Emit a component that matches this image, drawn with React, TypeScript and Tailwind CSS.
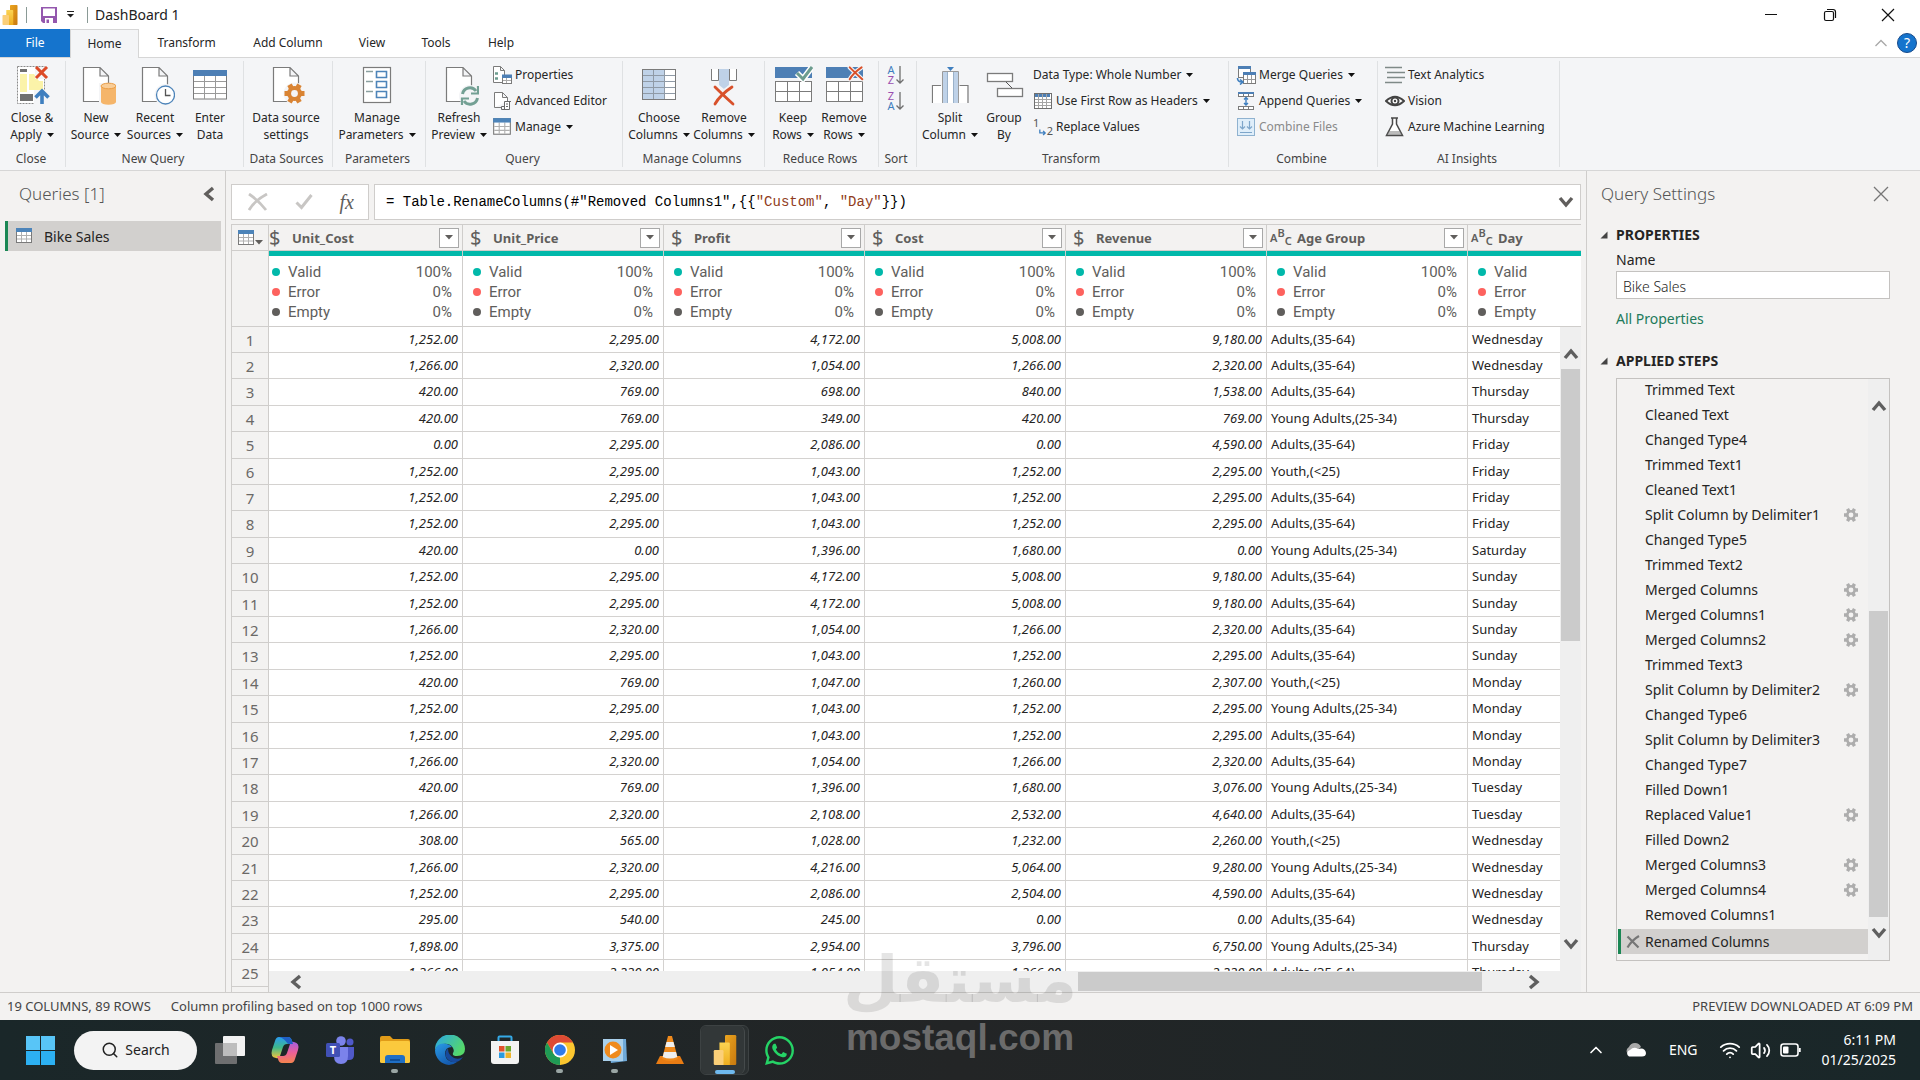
import React from "react";
import { FaWhatsapp } from "react-icons/fa";
import { ChevronUp, Search, Volume2, Wifi } from "lucide-react";

const A = "Adults,(35-64)";
const YA = "Young Adults,(25-34)";
const Y = "Youth,(<25)";

const rows = [
  ["1,252.00", "2,295.00", "4,172.00", "5,008.00", "9,180.00", A, "Wednesday"],
  ["1,266.00", "2,320.00", "1,054.00", "1,266.00", "2,320.00", A, "Wednesday"],
  ["420.00", "769.00", "698.00", "840.00", "1,538.00", A, "Thursday"],
  ["420.00", "769.00", "349.00", "420.00", "769.00", YA, "Thursday"],
  ["0.00", "2,295.00", "2,086.00", "0.00", "4,590.00", A, "Friday"],
  ["1,252.00", "2,295.00", "1,043.00", "1,252.00", "2,295.00", Y, "Friday"],
  ["1,252.00", "2,295.00", "1,043.00", "1,252.00", "2,295.00", A, "Friday"],
  ["1,252.00", "2,295.00", "1,043.00", "1,252.00", "2,295.00", A, "Friday"],
  ["420.00", "0.00", "1,396.00", "1,680.00", "0.00", YA, "Saturday"],
  ["1,252.00", "2,295.00", "4,172.00", "5,008.00", "9,180.00", A, "Sunday"],
  ["1,252.00", "2,295.00", "4,172.00", "5,008.00", "9,180.00", A, "Sunday"],
  ["1,266.00", "2,320.00", "1,054.00", "1,266.00", "2,320.00", A, "Sunday"],
  ["1,252.00", "2,295.00", "1,043.00", "1,252.00", "2,295.00", A, "Sunday"],
  ["420.00", "769.00", "1,047.00", "1,260.00", "2,307.00", Y, "Monday"],
  ["1,252.00", "2,295.00", "1,043.00", "1,252.00", "2,295.00", YA, "Monday"],
  ["1,252.00", "2,295.00", "1,043.00", "1,252.00", "2,295.00", A, "Monday"],
  ["1,266.00", "2,320.00", "1,054.00", "1,266.00", "2,320.00", A, "Monday"],
  ["420.00", "769.00", "1,396.00", "1,680.00", "3,076.00", YA, "Tuesday"],
  ["1,266.00", "2,320.00", "2,108.00", "2,532.00", "4,640.00", A, "Tuesday"],
  ["308.00", "565.00", "1,028.00", "1,232.00", "2,260.00", Y, "Wednesday"],
  ["1,266.00", "2,320.00", "4,216.00", "5,064.00", "9,280.00", YA, "Wednesday"],
  ["1,252.00", "2,295.00", "2,086.00", "2,504.00", "4,590.00", A, "Wednesday"],
  ["295.00", "540.00", "245.00", "0.00", "0.00", A, "Wednesday"],
  ["1,898.00", "3,375.00", "2,954.00", "3,796.00", "6,750.00", YA, "Thursday"],
  ["1,266.00", "2,320.00", "1,054.00", "1,266.00", "2,320.00", A, "Thursday"],
];

const columns = [
  { name: "Unit_Cost", type: "money" },
  { name: "Unit_Price", type: "money" },
  { name: "Profit", type: "money" },
  { name: "Cost", type: "money" },
  { name: "Revenue", type: "money" },
  { name: "Age Group", type: "text" },
  { name: "Day", type: "text", last: true },
];

const stats = [
  { label: "Valid", value: "100%", dot: "bg-[#01b8aa]" },
  { label: "Error", value: "0%", dot: "bg-[#fd625e]" },
  { label: "Empty", value: "0%", dot: "bg-[#605e5c]" },
];

const steps = [
  { name: "Trimmed Text" },
  { name: "Cleaned Text" },
  { name: "Changed Type4" },
  { name: "Trimmed Text1" },
  { name: "Cleaned Text1" },
  { name: "Split Column by Delimiter1", gear: true },
  { name: "Changed Type5" },
  { name: "Trimmed Text2" },
  { name: "Merged Columns", gear: true },
  { name: "Merged Columns1", gear: true },
  { name: "Merged Columns2", gear: true },
  { name: "Trimmed Text3" },
  { name: "Split Column by Delimiter2", gear: true },
  { name: "Changed Type6" },
  { name: "Split Column by Delimiter3", gear: true },
  { name: "Changed Type7" },
  { name: "Filled Down1" },
  { name: "Replaced Value1", gear: true },
  { name: "Filled Down2" },
  { name: "Merged Columns3", gear: true },
  { name: "Merged Columns4", gear: true },
  { name: "Removed Columns1" },
];

/* ---------- small shared pieces ---------- */

function Caret() {
  return (
    <svg width="7" height="4" viewBox="0 0 7 4" className="ml-[5px] inline-block shrink-0 align-middle">
      <path d="M0 0H7L3.5 4Z" fill="#111" />
    </svg>
  );
}

function Chevron({ dir, color = "#5f5f5f" }: { dir: "up" | "down" | "left" | "right"; color?: string }) {
  const d = {
    up: "M2 12L8 5L14 12",
    down: "M2 4L8 11L14 4",
    left: "M11 2L4 8L11 14",
    right: "M5 2L12 8L5 14",
  }[dir];
  return (
    <svg width="16" height="16" viewBox="0 0 16 16" className="shrink-0">
      <path d={d} fill="none" stroke={color} strokeWidth="3.4" />
    </svg>
  );
}

function PowerBi({ size }: { size: number }) {
  return (
    <svg width={size} height={size} viewBox="0 0 20 20">
      <defs>
        <linearGradient id="pbiBack" x1="0" y1="0" x2="1" y2="1">
          <stop offset="0" stopColor="#eba51f" />
          <stop offset="1" stopColor="#c8790f" />
        </linearGradient>
        <linearGradient id="pbiMid" x1="0" y1="0" x2="0" y2="1">
          <stop offset="0" stopColor="#fbd352" />
          <stop offset="1" stopColor="#efae1f" />
        </linearGradient>
      </defs>
      <rect x="10" y="0" width="7.5" height="20" rx="0.8" fill="url(#pbiBack)" />
      <path d="M6.3 5H12.4Q13.2 5 13.2 5.8V20H6.3Z" fill="url(#pbiMid)" />
      <path d="M2.5 10.8Q2.5 10 3.3 10H8.2Q9 10 9 10.8V20H3.3Q2.5 20 2.5 19.2Z" fill="#fbcf78" />
    </svg>
  );
}

function TableIcon({ w = 18 }: { w?: number }) {
  return (
    <svg width={w} height={w} viewBox="0 0 18 18" className="shrink-0">
      <rect x="1.5" y="1.5" width="15" height="14" fill="#fff" stroke="#7a7a7a" />
      <path d="M6.5 5V15M11.5 5V15M2 8.5H16M2 12H16" stroke="#b0b0b0" />
      <rect x="1" y="1" width="16" height="4" fill="#4d84b9" />
    </svg>
  );
}

function Page() {
  return <path d="M3.5 1.5H20L28.5 10V35.5H3.5Z M20 1.5V10H28.5" fill="#fff" stroke="#7b7b7b" strokeWidth="1.2" />;
}

function gearPath(cx: number, cy: number, r: number) {
  const teeth = [];
  for (let i = 0; i < 6; i++) {
    const a = (i * Math.PI) / 3;
    teeth.push(`M${cx} ${cy}L${cx + Math.cos(a) * r} ${cy + Math.sin(a) * r}`);
  }
  return teeth.join("");
}

function Gear() {
  return (
    <svg width="16" height="16" viewBox="0 0 16 16">
      <path d={gearPath(8, 8, 7)} stroke="#adadad" strokeWidth="3.4" />
      <circle cx="8" cy="8" r="5" fill="#adadad" />
      <circle cx="8" cy="8" r="2.4" fill="#f3f2f1" />
    </svg>
  );
}

/* ---------- ribbon drawings ---------- */

function Icon40({ children, page }: { children: React.ReactNode; page?: boolean }) {
  return (
    <svg width="40" height="40" viewBox={page ? "-4 0 40 40" : "0 0 40 40"} className="shrink-0">
      {page && <Page />}
      {children}
    </svg>
  );
}

const cross = (
  <g fill="none" strokeLinecap="round">
    <path d="M-9 -8Q-2 -1 9 9M8 -8Q-4 0 -9 9" stroke="#f4f5f7" strokeWidth="6" />
    <path d="M-9 -8Q-2 -1 9 9M8 -8Q-4 0 -9 9" stroke="#d8512b" strokeWidth="2.8" />
  </g>
);

const icons = {
  closeApply: (
    <Icon40>
      <rect x="5.5" y="0.5" width="27" height="37" fill="#fff" stroke="#8a8a8a" strokeDasharray="2 1" />
      <rect x="8" y="3" width="7" height="3" fill="#707070" />
      <rect x="8" y="8" width="7" height="18" fill="#fbf3a9" />
      <path d="M17 8H22L27 15H31V24H17Z" fill="#fbf3a9" />
      <rect x="8" y="28" width="13" height="7" fill="#707070" />
      <path d="M23 1H38V13H23Z M22 24H38V40H22Z" fill="#f4f5f7" />
      <path d="M24 1L35 12M35 1L24 12" stroke="#dc4a27" strokeWidth="3" />
      <path d="M30 38V26M23.5 31.5L30 25L36.5 31.5" fill="none" stroke="#3f7fbf" strokeWidth="3.6" />
    </Icon40>
  ),
  newSource: (
    <Icon40 page>
      <path d="M19 17H40V40H19Z" fill="#f4f5f7" />
      <path d="M21 20V36A7.5 2.8 0 0 0 36 36V20Z" fill="#f5b56a" />
      <ellipse cx="28.5" cy="20" rx="7.5" ry="2.8" fill="#f9cd97" stroke="#eb9d45" />
    </Icon40>
  ),
  recent: (
    <Icon40 page>
      <circle cx="26.5" cy="29" r="11" fill="#f4f5f7" />
      <circle cx="26.5" cy="29" r="9" fill="#fff" stroke="#4d84b9" strokeWidth="1.3" />
      <path d="M26.5 23V29.5H31.5" fill="none" stroke="#555" strokeWidth="1.3" />
    </Icon40>
  ),
  enterData: (
    <Icon40>
      <rect x="3.5" y="5" width="33" height="28" fill="#fff" stroke="#7b7b7b" />
      <path d="M14.5 9V33M25.5 9V33M4 15.5H36M4 21.5H36M4 27.5H36" stroke="#999" />
      <rect x="3" y="4" width="34" height="6" fill="#4d7fb5" />
    </Icon40>
  ),
  dataSource: (
    <Icon40 page>
      <circle cx="24.5" cy="27.5" r="11" fill="#f4f5f7" />
      <path d={gearPath(24.5, 27.5, 10)} stroke="#d98434" strokeWidth="5" />
      <circle cx="24.5" cy="27.5" r="7.5" fill="#d98434" />
      <circle cx="24.5" cy="27.5" r="3.4" fill="#f4f5f7" />
    </Icon40>
  ),
  params: (
    <Icon40>
      <rect x="6.5" y="1.5" width="27" height="35" fill="#fff" stroke="#7b7b7b" strokeWidth="1.2" />
      <path d="M9 5.5H16M9 15.5H16M9 25.5H16" stroke="#8aa0a0" strokeWidth="1.3" />
      <path d="M19.5 5.5H29.5V11.5H19.5ZM19.5 15.5H29.5V21.5H19.5ZM19.5 25.5H29.5V31.5H19.5Z" fill="#fff" stroke="#4d84b9" strokeWidth="1.6" />
    </Icon40>
  ),
  refresh: (
    <Icon40 page>
      <circle cx="27" cy="30" r="11" fill="#f4f5f7" />
      <g fill="none" stroke="#73a094" strokeWidth="3">
        <path d="M19.500 28A7.500 7.500 0 0 1 33 25" />
        <path d="M34.500 32A7.500 7.500 0 0 1 21 35" />
        <path d="M35 20V27.500H28M19 39V32.500H26" strokeWidth="2.2" />
      </g>
    </Icon40>
  ),
  chooseCols: (
    <Icon40>
      <rect x="3.5" y="3.5" width="33" height="30" fill="#fff" />
      <rect x="4" y="4" width="22" height="29" fill="#bfd2e8" />
      <path d="M14.5 4V33M25.5 4V33M4 9.5H36M4 15.5H36M4 21.5H36M4 27.5H36" stroke="#8f9aa6" />
      <rect x="3.5" y="3.5" width="33" height="30" fill="none" stroke="#7b7b7b" />
    </Icon40>
  ),
  removeCols: (
    <Icon40>
      <path d="M7.5 3V14.5H14.5V3M25.5 3V14.5H32.5V3" fill="#fff" stroke="#7b7b7b" />
      <path d="M15 3H25V19L20 23L15 19Z" fill="#bfd2e8" />
      <g transform="translate(20 29)">{cross}</g>
    </Icon40>
  ),
  keepRows: (
    <Icon40>
      <rect x="2" y="1" width="37" height="11" fill="#4d7fb5" />
      <rect x="2.5" y="15.5" width="36" height="20" fill="#fff" stroke="#7b7b7b" />
      <path d="M14.5 16V35M26.5 16V35M3 25.5H38" stroke="#7b7b7b" />
      <path d="M24 7L30 13L39 1" fill="none" stroke="#fff" strokeWidth="6" />
      <path d="M24 7L30 13L39 1" fill="none" stroke="#6c9c8f" strokeWidth="3" />
    </Icon40>
  ),
  removeRows: (
    <Icon40>
      <rect x="2" y="1" width="37" height="11" fill="#4d7fb5" />
      <rect x="2.5" y="15.5" width="36" height="20" fill="#fff" stroke="#7b7b7b" />
      <path d="M14.5 16V35M26.5 16V35M3 25.5H38" stroke="#7b7b7b" />
      <g transform="translate(32 7) scale(0.7)">{cross}</g>
    </Icon40>
  ),
  splitCol: (
    <Icon40>
      <path d="M2.5 37V19.5H11M38 37V19.5H29.5" fill="none" stroke="#7b7b7b" strokeWidth="1.2" />
      <path d="M3 20H12V37H3ZM29 20H37V37H29Z" fill="#fff" />
      <path d="M12.5 37V5.5H28.5V37" fill="#fff" stroke="#9a9a9a" />
      <path d="M13 6H17V37H13ZM23 6H28V37H23Z" fill="#bfd2e8" />
      <path d="M17.5 37V6M23.5 37V6" stroke="#9ab1c9" />
      <path d="M17 1H24L20.5 5Z" fill="#3f7fbf" />
    </Icon40>
  ),
  groupBy: (
    <Icon40>
      <rect x="3.5" y="7.5" width="25" height="8" fill="#fff" stroke="#7b7b7b" strokeWidth="1.3" />
      <rect x="13.5" y="22.5" width="25" height="8" fill="#fff" stroke="#7b7b7b" strokeWidth="1.3" />
      <path d="M22 16L28 22" stroke="#555" />
    </Icon40>
  ),
};

function Icon20({ children }: { children: React.ReactNode }) {
  return (
    <svg width="20" height="20" viewBox="0 0 20 20" className="shrink-0">
      {children}
    </svg>
  );
}

const small = {
  properties: (
    <Icon20>
      <path d="M1.5 1.5H8.5L12.5 5.5V17.5H1.5ZM8.5 1.5V5.5H12.5" fill="#fff" stroke="#7b7b7b" />
      <path d="M3 8.5H6M3 13.5H6" stroke="#6c9c8f" strokeWidth="2.5" />
      <rect x="10.5" y="10.5" width="9" height="8" fill="#fff" stroke="#7b7b7b" />
      <path d="M11 15.5H19M14.5 13V18" stroke="#aaa" />
      <rect x="10" y="9.5" width="10" height="3.5" fill="#4d7fb5" />
    </Icon20>
  ),
  editor: (
    <Icon20>
      <path d="M2.5 16.5V1.5H10.5L15.5 6.5V10M10.5 1.5V6.5H15.5M2.5 16.5H9" fill="#fff" stroke="#7b7b7b" />
      <path d="M12.5 10.5H19M12.5 10.5V18.5H17.5V10.5M9.5 18.5H16M9.5 18.5V15.5H12" fill="#fff" stroke="#6a6a6a" />
      <path d="M14 13H16M14 15.5H16" stroke="#6a6a6a" />
    </Icon20>
  ),
  manage: <TableIcon w={20} />,
  headers: (
    <Icon20>
      <rect x="1.5" y="2.5" width="17" height="15" fill="#fff" stroke="#6f6f6f" />
      <path d="M5.5 3V17M9.5 3V17M13.5 3V17M2 8.5H18M2 11.5H18M2 14.5H18" stroke="#a5a5a5" />
      <path d="M2 4.5H18" stroke="#4d7fb5" strokeWidth="3" strokeDasharray="3 1" />
    </Icon20>
  ),
  merge: (
    <Icon20>
      <rect x="2.5" y="2.5" width="12" height="10" fill="#fff" stroke="#7b7b7b" />
      <rect x="2" y="1" width="13" height="3" fill="#4d7fb5" />
      <rect x="7.5" y="8.5" width="12" height="10" fill="#fff" stroke="#7b7b7b" />
      <path d="M11.5 10V18M15.5 10V18M8 14.5H19" stroke="#999" />
      <rect x="7" y="7" width="13" height="3" fill="#4d7fb5" />
      <path d="M1.5 13Q1.5 17 6 17M4 14.5L7 17L4 19.5" fill="none" stroke="#3f7fbf" strokeWidth="1.6" />
    </Icon20>
  ),
  append: (
    <Icon20>
      <rect x="2.5" y="1.5" width="15" height="4" fill="#fff" stroke="#7b7b7b" />
      <rect x="2" y="1" width="16" height="2" fill="#4d7fb5" />
      <rect x="2.5" y="15.5" width="15" height="3" fill="#fff" stroke="#7b7b7b" />
      <path d="M7.5 3V5M12.5 3V5M7.5 15V19M12.5 15V19" stroke="#7b7b7b" />
      <path d="M10 7V14M8 8.5L10 6.5L12 8.5M8 12L10 14L12 12" fill="none" stroke="#3f7fbf" strokeWidth="1.4" />
    </Icon20>
  ),
  combine: (
    <Icon20>
      <rect x="1.5" y="1.5" width="17" height="17" fill="#dfeefa" stroke="#8fb2d0" />
      <path d="M6.5 4V12M4 9.5L6.5 12L9 9.5M13.5 4V12M11 9.5L13.5 12L16 9.5M4 15.5H16" fill="none" stroke="#7ea6ca" strokeWidth="1.2" />
    </Icon20>
  ),
  text: (
    <Icon20>
      <path d="M0 2.5H17M2 7.5H20M2 12.5H20M0 17.5H17" stroke="#7f8a88" strokeWidth="1.5" />
    </Icon20>
  ),
  vision: (
    <Icon20>
      <path d="M1 10Q10 1.500 19 10Q10 18.500 1 10Z" fill="#fff" stroke="#444" strokeWidth="2" />
      <circle cx="10" cy="10" r="3.5" fill="#fff" stroke="#444" strokeWidth="2" />
      <circle cx="10" cy="10" r="1.2" fill="#444" />
    </Icon20>
  ),
  flask: (
    <Icon20>
      <path d="M6 1H13M7.5 1V7L1.5 18.5H17.5L11.5 7V1" fill="#fff" stroke="#4a4a4a" strokeWidth="1.5" />
      <path d="M4 14H15L17 18H2Z" fill="#777" opacity="0.5" />
    </Icon20>
  ),
};

function SortIcon({ top, bottom, topColor, bottomColor }: { top: string; bottom: string; topColor: string; bottomColor: string }) {
  return (
    <span className="flex h-[26px] items-center">
      <span className="flex flex-col text-[11px] leading-[10px]">
        <span className={topColor}>{top}</span>
        <span className={bottomColor}>{bottom}</span>
      </span>
      <svg width="10" height="20" viewBox="0 0 10 20">
        <path d="M5 1V18M1.5 14.5L5 18L8.5 14.5" fill="none" stroke="#6f6f6f" strokeWidth="1.3" />
      </svg>
    </span>
  );
}

/* ---------- ribbon building blocks ---------- */

function Big({ icon, a, b, caret, width }: { icon: React.ReactNode; a: string; b: string; caret?: boolean; width: string }) {
  return (
    <button className={`flex shrink-0 flex-col items-center pt-2 ${width}`}>
      {icon}
      <span className="mt-[3px] whitespace-nowrap leading-[17px]">{a}</span>
      <span className="flex items-center whitespace-nowrap leading-[17px]">
        {b}
        {caret && <Caret />}
      </span>
    </button>
  );
}

function Small({ icon, label, caret, disabled }: { icon?: React.ReactNode; label: string; caret?: boolean; disabled?: boolean }) {
  return (
    <button disabled={disabled} className={`flex h-[26px] items-center gap-[3px] whitespace-nowrap ${disabled ? "text-[#8a8a8a]" : ""}`}>
      {icon}
      <span className="flex items-center">
        {label}
        {caret && <Caret />}
      </span>
    </button>
  );
}

function Group({ label, width, children }: { label: string; width: string; children: React.ReactNode }) {
  return (
    <>
      <section className={`flex shrink-0 flex-col pr-[3px] ${width}`}>
        <div className="flex h-[91px]">{children}</div>
        <div className="h-5 text-center leading-5 whitespace-nowrap text-[#444]">{label}</div>
      </section>
      <div className="my-[3px] w-px shrink-0 bg-[#dfe1e3]" />
    </>
  );
}

function Ribbon() {
  return (
    <div className="flex h-[113px] shrink-0 overflow-hidden border-b border-[#d6d6d6] bg-[#f4f5f7] text-xs text-[#262626]">
      <Group label="Close" width="w-[65px]">
        <Big icon={icons.closeApply} a="Close &" b="Apply" caret width="w-[64px]" />
      </Group>
      <Group label="New Query" width="w-[177px]">
        <Big icon={icons.newSource} a="New" b="Source" caret width="w-[60px]" />
        <Big icon={icons.recent} a="Recent" b="Sources" caret width="w-[58px]" />
        <Big icon={icons.enterData} a="Enter" b="Data" width="w-[52px]" />
      </Group>
      <Group label="Data Sources" width="w-[88px]">
        <Big icon={icons.dataSource} a="Data source" b="settings" width="w-[84px]" />
      </Group>
      <Group label="Parameters" width="w-[92px]">
        <Big icon={icons.params} a="Manage" b="Parameters" caret width="w-[88px]" />
      </Group>
      <Group label="Query" width="w-[196px]">
        <Big icon={icons.refresh} a="Refresh" b="Preview" caret width="w-[66px]" />
        <div className="flex flex-col pt-1">
          <Small icon={small.properties} label="Properties" />
          <Small icon={small.editor} label="Advanced Editor" />
          <Small icon={small.manage} label="Manage" caret />
        </div>
      </Group>
      <Group label="Manage Columns" width="w-[141px]">
        <Big icon={icons.chooseCols} a="Choose" b="Columns" caret width="w-[72px]" />
        <Big icon={icons.removeCols} a="Remove" b="Columns" caret width="w-[58px]" />
      </Group>
      <Group label="Reduce Rows" width="w-[113px]">
        <Big icon={icons.keepRows} a="Keep" b="Rows" caret width="w-[56px]" />
        <Big icon={icons.removeRows} a="Remove" b="Rows" caret width="w-[46px]" />
      </Group>
      <Group label="Sort" width="w-[37px]">
        <div className="flex w-full flex-col items-center pt-1">
          <button aria-label="Sort ascending">
            <SortIcon top="A" bottom="Z" topColor="text-[#3f7fbf]" bottomColor="text-[#9a4fb0]" />
          </button>
          <button aria-label="Sort descending">
            <SortIcon top="Z" bottom="A" topColor="text-[#9a4fb0]" bottomColor="text-[#3f7fbf]" />
          </button>
        </div>
      </Group>
      <Group label="Transform" width="w-[311px]">
        <Big icon={icons.splitCol} a="Split" b="Column" caret width="w-[66px]" />
        <Big icon={icons.groupBy} a="Group" b="By" width="w-[42px]" />
        <div className="flex flex-col pt-1 pl-2">
          <Small label="Data Type: Whole Number" caret />
          <Small icon={small.headers} label="Use First Row as Headers" caret />
          <Small
            icon={
              <span className="flex w-5 shrink-0 justify-between text-[11px] leading-[10px] text-[#555]">
                <span className="self-start">1</span>
                <svg width="9" height="7" viewBox="0 0 9 7" className="self-end">
                  <path d="M1 0V4H7M5 1.5L7.5 4L5 6.5" fill="none" stroke="#3f7fbf" strokeWidth="1.6" />
                </svg>
                <span className="pt-2">2</span>
              </span>
            }
            label="Replace Values"
          />
        </div>
      </Group>
      <Group label="Combine" width="w-[148px]">
        <div className="flex flex-col pt-1 pl-[7px]">
          <Small icon={small.merge} label="Merge Queries" caret />
          <Small icon={small.append} label="Append Queries" caret />
          <Small icon={small.combine} label="Combine Files" disabled />
        </div>
      </Group>
      <Group label="AI Insights" width="w-[181px]">
        <div className="flex flex-col pt-1 pl-[7px]">
          <Small icon={small.text} label="Text Analytics" />
          <Small icon={small.vision} label="Vision" />
          <Small icon={small.flask} label="Azure Machine Learning" />
        </div>
      </Group>
    </div>
  );
}

function TitleBar() {
  return (
    <header className="flex h-[29px] shrink-0 items-center bg-white">
      <PowerBi size={20} />
      <div className="ml-1.5 h-4 w-px bg-[#8a9a96]" />
      <button aria-label="Save" className="ml-3.5">
        <svg width="16" height="16" viewBox="0 0 16 16">
          <path d="M0 0H16V16H2L0 14Z" fill="#9458ae" />
          <rect x="2" y="1.5" width="12" height="7.5" fill="#fff" />
          <rect x="4" y="11" width="8" height="5" fill="#fff" />
          <rect x="5.5" y="12.5" width="2.5" height="3.5" fill="#9458ae" />
        </svg>
      </button>
      <button aria-label="Customize toolbar" className="ml-2.5">
        <svg width="7" height="7" viewBox="0 0 7 7">
          <path d="M0 0.5H7" stroke="#222" />
          <path d="M0 3H7L3.5 6.5Z" fill="#222" />
        </svg>
      </button>
      <div className="ml-[13px] h-4 w-px bg-[#8a9a96]" />
      <h1 className="ml-[7px] text-sm text-[#222]">DashBoard 1</h1>
      <div className="ml-auto flex">
        <button aria-label="Minimize" className="flex w-[58px] justify-center">
          <svg width="14" height="14" viewBox="0 0 14 14">
            <path d="M1 6.5H13" stroke="#111" />
          </svg>
        </button>
        <button aria-label="Restore" className="flex w-[59px] justify-center">
          <svg width="14" height="14" viewBox="0 0 14 14" fill="none" stroke="#111" strokeWidth="1.2">
            <rect x="1.5" y="3.5" width="9" height="9" rx="1.5" />
            <path d="M4 1.5H10Q12.5 1.5 12.5 4V10" />
          </svg>
        </button>
        <button aria-label="Close" className="mr-[3px] flex w-[58px] justify-center">
          <svg width="14" height="14" viewBox="0 0 14 14" stroke="#111" strokeWidth="1.2">
            <path d="M1 1L13 13M13 1L1 13" />
          </svg>
        </button>
      </div>
    </header>
  );
}

function Tabs() {
  return (
    <nav className="flex h-[29px] shrink-0 border-b border-[#d6d6d6] bg-white text-xs text-[#262626]">
      <button className="h-7 w-[70px] bg-[#1574cd] text-white">File</button>
      <button className="-mb-px h-[29px] w-[69px] border border-b-0 border-[#d6d6d6] bg-[#f4f5f7]">Home</button>
      <button className="w-[95px]">Transform</button>
      <button className="w-[108px]">Add Column</button>
      <button className="w-[60px]">View</button>
      <button className="w-[68px]">Tools</button>
      <button className="w-[62px]">Help</button>
      <button aria-label="Collapse ribbon" className="mr-2.5 ml-auto">
        <svg width="12" height="8" viewBox="0 0 12 8">
          <path d="M0.5 7L6 1.5L11.5 7" fill="none" stroke="#a8a8a8" strokeWidth="1.3" />
        </svg>
      </button>
      <button aria-label="Help" className="mt-1 mr-[3px] h-5 w-5 rounded-full border border-[#174a8b] bg-[#1574cd] text-center text-sm leading-[18px] text-white">
        ?
      </button>
    </nav>
  );
}

/* ---------- panes ---------- */

function QueriesPane() {
  return (
    <aside className="flex w-[226px] shrink-0 flex-col border-r border-[#cfcdcb]">
      <div className="flex h-[50px] items-center justify-between pr-[7px] pb-1 pl-[19px]">
        <h2 className="text-[17px] font-light text-[#555]">Queries [1]</h2>
        <button aria-label="Collapse queries">
          <Chevron dir="left" color="#605e5c" />
        </button>
      </div>
      <button className="mr-1 ml-[5px] flex h-[30px] items-center border-l-[3px] border-[#1a8754] bg-[#d2d0ce] pl-[7px] text-sm text-[#252423]">
        <TableIcon />
        <span className="ml-[11px] pt-0.5">Bike Sales</span>
      </button>
    </aside>
  );
}

function FormulaBar() {
  return (
    <div className="flex h-9 shrink-0 gap-[5px]">
      <div className="flex w-[138px] items-center justify-between border border-[#cfcdcb] bg-white pr-3.5 pl-4">
        <button aria-label="Cancel">
          <svg width="20" height="18" viewBox="0 0 20 18">
            <path d="M1 1Q10 7 18 17M19 1Q6 8 1 17" fill="none" stroke="#c8c6c4" strokeWidth="2.8" />
          </svg>
        </button>
        <button aria-label="Commit">
          <svg width="18" height="16" viewBox="0 0 18 16">
            <path d="M1.5 8.5L6.5 13.5L16.5 1" fill="none" stroke="#c8c6c4" strokeWidth="3" />
          </svg>
        </button>
        <button aria-label="Insert step" className="font-['Liberation_Serif',serif] text-xl leading-6 text-[#605e5c] italic">
          fx
        </button>
      </div>
      <div className="flex flex-1 items-center justify-between border border-[#cfcdcb] bg-white pr-1.5 pl-[11px]">
        <code className="font-['Liberation_Mono',monospace] text-sm whitespace-pre text-black">
          = Table.RenameColumns(#"Removed Columns1",{"{{"}
          <span className="text-[#903c20]">"Custom"</span>, <span className="text-[#903c20]">"Day"</span>
          {"}})"}
        </code>
        <button aria-label="Expand formula bar">
          <Chevron dir="down" color="#605e5c" />
        </button>
      </div>
    </div>
  );
}

function TypeIcon({ type }: { type: string }) {
  if (type === "money") return <span className="w-[23px] text-xl leading-6 font-normal">$</span>;
  return (
    <span className="flex w-[27px] text-[11px] leading-[14px] font-semibold">
      <span className="pt-[3px]">A</span>
      <span className="-mt-0.5">B</span>
      <span className="pt-1.5">C</span>
    </span>
  );
}

function DataGrid() {
  return (
    <div className="relative mt-1 flex-1 overflow-hidden border-t border-l border-[#cfcdcb]">
      <table className="w-full table-fixed border-separate border-spacing-0">
        <colgroup>
          <col className="w-[37px]" />
          <col className="w-[194px]" />
          {columns.slice(1).map((c) => (
            <col key={c.name} className={c.last ? "" : "w-[201px]"} />
          ))}
        </colgroup>
        <thead className="text-[#605e5c]">
          <tr className="h-[26px]">
            <th className="border-r border-b border-[#cfcdcb] p-0">
              <button aria-label="Table menu" className="flex items-end pl-[5px]">
                <TableIcon />
                <svg width="8" height="5" viewBox="0 0 8 5" className="mb-0.5">
                  <path d="M0 0H8L4 4.5Z" fill="#605e5c" />
                </svg>
              </button>
            </th>
            {columns.map((c, i) => (
              <th key={c.name} className="border-r border-b border-[#cfcdcb] p-0 text-left last:border-r-0">
                <div className={`flex h-[25px] items-center pr-[3px] ${i === 0 ? "pl-0" : c.type === "money" ? "pl-[7px]" : "pl-[3px]"}`}>
                  <TypeIcon type={c.type} />
                  <span className="pt-px text-[13px] font-bold">{c.name}</span>
                  {!c.last && (
                    <button aria-label={`Filter ${c.name}`} className="ml-auto flex h-5 w-5 items-center justify-center border border-[#a8a8a8] bg-white">
                      <svg width="8" height="5" viewBox="0 0 8 5">
                        <path d="M0 0H8L4 4.5Z" fill="#605e5c" />
                      </svg>
                    </button>
                  )}
                </div>
              </th>
            ))}
          </tr>
          <tr className="h-[76px]">
            <td className="border-r border-b border-[#cfcdcb] p-0"></td>
            {columns.map((c, i) => (
              <td key={c.name} className="border-r border-b border-[#cfcdcb] bg-white p-0 align-top last:border-r-0">
                <div className="h-[5px] bg-[#01b8aa]" />
                <div className={`pt-1.5 pr-[10px] font-['Roboto',sans-serif] text-[15px] leading-5 ${i === 0 ? "pl-[3px]" : "pl-[10px]"}`}>
                  {stats.map((s) => (
                    <div key={s.label} className="flex items-center">
                      <span className={`mr-2 h-2 w-2 rounded-full ${s.dot}`} />
                      <span>{s.label}</span>
                      {!c.last && <span className="ml-auto">{s.value}</span>}
                    </div>
                  ))}
                </div>
              </td>
            ))}
          </tr>
        </thead>
        <tbody className="text-[13px] text-[#252423]">
          {rows.map((row, i) => (
            <tr key={i} className={i % 5 === 2 || i % 5 === 4 ? "h-[27px]" : "h-[26px]"}>
              <th className="border-r border-b border-[#cfcdcb] p-0 text-[15px] leading-5 font-normal text-[#6b6967]">{i + 1}</th>
              {row.map((cell, j) => (
                <td
                  key={j}
                  className={`border-r border-b border-[#d4d2d0] bg-white pt-0 pb-0.5 leading-5 whitespace-nowrap last:border-r-0 ${j < 5 ? "pr-1 pl-0 text-right italic" : "pr-0 pl-1"}`}
                >
                  {cell}
                </td>
              ))}
            </tr>
          ))}
          <tr className="h-[26px]">
            <th className="border-r border-[#cfcdcb] p-0"></th>
          </tr>
        </tbody>
      </table>
      {/* scroll bars lie over the last row and column */}
      <div className="absolute top-[102px] right-0 bottom-0 flex w-[21px] flex-col items-center bg-[#efefef]">
        <div className="flex h-[42px] items-end pb-[7px]">
          <Chevron dir="up" />
        </div>
        <div className="h-[272px] w-[19px] bg-[#cbcbcb]" />
        <div className="mt-auto pb-10">
          <Chevron dir="down" />
        </div>
      </div>
      <div className="absolute right-0 bottom-0 left-[37px] flex h-[21px] items-center bg-[#efefef]">
        <div className="ml-5">
          <Chevron dir="left" />
        </div>
        <div className="mr-[43px] ml-auto h-[19px] w-[404px] bg-[#cbcbcb]" />
        <div className="mr-10">
          <Chevron dir="right" />
        </div>
      </div>
    </div>
  );
}

function SectionTitle({ children }: { children: React.ReactNode }) {
  return (
    <h3 className="flex h-5 items-center text-sm font-bold text-[#252423]">
      <svg width="8" height="8" viewBox="0 0 8 8" className="mr-2">
        <path d="M7.5 0.5V7.5H0.5Z" fill="#444" />
      </svg>
      {children}
    </h3>
  );
}

function SettingsPane() {
  return (
    <aside className="flex w-[334px] shrink-0 flex-col border-l border-[#cfcdcb] pr-[30px] pl-[13px] text-sm text-[#252423]">
      <div className="flex h-[46px] items-center justify-between">
        <h2 className="ml-px text-[17px] font-light text-[#555]">Query Settings</h2>
        <button aria-label="Close settings" className="mr-px">
          <svg width="16" height="16" viewBox="0 0 16 16">
            <path d="M1 1L15 15M15 1L1 15" stroke="#767676" strokeWidth="1.3" />
          </svg>
        </button>
      </div>
      <div className="mt-2 flex flex-col">
        <SectionTitle>PROPERTIES</SectionTitle>
        <div className="ml-4 flex flex-col">
          <label htmlFor="query-name" className="mt-1 h-[22px] leading-[22px]">
            Name
          </label>
          <input id="query-name" defaultValue="Bike Sales" className="h-7 border border-[#c4c2c0] bg-white px-1.5 pt-0.5 text-sm font-light" />
          <a href="#properties" className="mt-2.5 self-start leading-5 text-[#217a5b]">
            All Properties
          </a>
        </div>
      </div>
      <div className="mt-[22px] flex flex-col">
        <SectionTitle>APPLIED STEPS</SectionTitle>
        <div className="mt-[7px] ml-4 flex h-[583px] border border-[#c4c2c0]">
          <ul className="flex-1">
            {steps.map((s) => (
              <li key={s.name} className="flex h-[25px] items-center justify-between pr-[9px] pb-[3px] pl-7">
                <button className="leading-[22px]">{s.name}</button>
                {s.gear && (
                  <button aria-label={`Edit ${s.name}`}>
                    <Gear />
                  </button>
                )}
              </li>
            ))}
            <li className="ml-px flex h-[25px] items-center border-l-[3px] border-[#1a8754] bg-[#d2d0ce] pl-[5px]">
              <button aria-label="Delete step">
                <svg width="14" height="14" viewBox="0 0 14 14">
                  <path d="M1.5 1.5L12.5 12.5M13 1Q6 5 1.5 12.5" fill="none" stroke="#767676" strokeWidth="2.2" />
                </svg>
              </button>
              <button className="ml-[5px] leading-6">Renamed Columns</button>
            </li>
          </ul>
          <div className="flex w-[21px] flex-col items-center bg-[#efefef] pt-[19px] pb-[19px]">
            <Chevron dir="up" />
            <div className="mt-auto h-[306px] w-[19px] bg-[#cbcbcb]" />
            <div className="mt-2">
              <Chevron dir="down" />
            </div>
          </div>
        </div>
      </div>
    </aside>
  );
}

/* ---------- taskbar ---------- */

const apps = {
  taskView: (
    <svg width="30" height="30" viewBox="0 0 30 30">
      <rect x="8" y="1" width="22" height="20" rx="1" fill="#f2f2f2" />
      <rect x="0" y="8" width="22" height="21" rx="1" fill="#7d7d7d" opacity="0.85" />
      <rect x="8" y="8" width="14" height="13" fill="#bdbdbd" />
    </svg>
  ),
  copilot: (
    <svg width="30" height="30" viewBox="0 0 30 30">
      <defs>
        <linearGradient id="copA" x1="0" y1="0" x2="0" y2="1">
          <stop offset="0" stopColor="#2a9bf0" />
          <stop offset="0.5" stopColor="#3fb98a" />
          <stop offset="1" stopColor="#f5c33b" />
        </linearGradient>
        <linearGradient id="copB" x1="0" y1="0" x2="0" y2="1">
          <stop offset="0" stopColor="#a45ee0" />
          <stop offset="0.5" stopColor="#ea5f9a" />
          <stop offset="1" stopColor="#f5844e" />
        </linearGradient>
      </defs>
      <path d="M9 2H18Q21 2 22 6L23 9H17Q14 9 13 12L10 21Q9 24 6 23Q0 22 2 15L5 6Q6 2 9 2Z" fill="url(#copA)" />
      <path d="M21 28H12Q9 28 8 24L7 21H13Q16 21 17 18L20 9Q21 6 24 7Q30 8 28 15L25 24Q24 28 21 28Z" fill="url(#copB)" />
      <path d="M9 2H18Q21 2 22 6L23 9H18Q14 3 9 2Z" fill="#1f5fc4" />
    </svg>
  ),
  teams: (
    <svg width="30" height="30" viewBox="0 0 30 30">
      <circle cx="25" cy="7" r="3.5" fill="#5059c9" />
      <path d="M20 12H29V20Q29 25 24 25H20Z" fill="#5059c9" />
      <circle cx="16" cy="6" r="4.8" fill="#7b83eb" />
      <path d="M9 12H23V21Q23 29 16 29Q9 29 9 21Z" fill="#7b83eb" />
      <rect x="1" y="8" width="14" height="14" rx="1.5" fill="#4150b5" />
      <text x="8" y="19" textAnchor="middle" fontSize="11" fontWeight="700" fill="#fff" fontFamily="Noto Sans">
        T
      </text>
    </svg>
  ),
  explorer: (
    <svg width="30" height="30" viewBox="0 0 30 30">
      <path d="M0 3Q0 1 2 1H10L13 4H28Q30 4 30 6V10H0Z" fill="#e09b18" />
      <rect x="0" y="6" width="30" height="22" rx="1.5" fill="#fbc93d" />
      <path d="M5 28V23Q5 20 8 20H22Q25 20 25 23V28Z" fill="#1f6fc5" />
      <path d="M10 25H20" stroke="#0f4f99" strokeWidth="2" />
    </svg>
  ),
  edge: (
    <svg width="30" height="30" viewBox="0 0 30 30">
      <defs>
        <linearGradient id="edgeA" x1="0" y1="0" x2="1" y2="0.5">
          <stop offset="0" stopColor="#2aa5e8" />
          <stop offset="1" stopColor="#55d86b" />
        </linearGradient>
        <linearGradient id="edgeB" x1="0" y1="0" x2="0.6" y2="1">
          <stop offset="0" stopColor="#2a9be6" />
          <stop offset="1" stopColor="#1459ae" />
        </linearGradient>
      </defs>
      <path d="M0 15A15 15 0 0 1 30 14Q30 21 22 21Q17 21 18 18Q19.5 16 18 13Q15 8 8 9Q2 10 0 15Z" fill="url(#edgeA)" />
      <path d="M0 15Q2 8 9 8.5Q15 9 17 12Q10 12 10 19Q11 28 22 27Q18 30 14 30A15 15 0 0 1 0 15Z" fill="url(#edgeB)" />
      <path d="M13 13.5Q9 17 11 22Q15 29 23 26.5Q26 25 28 22Q24 25 19 23Q13 20 13 13.5Z" fill="#174a9c" />
    </svg>
  ),
  store: (
    <svg width="30" height="30" viewBox="0 0 30 30">
      <path d="M8.5 6V2.5Q8.5 1.5 9.5 1.5H20.5Q21.5 1.5 21.5 2.5V6" fill="none" stroke="#35a9e6" strokeWidth="2" />
      <path d="M1 6H29V26Q29 29 26 29H4Q1 29 1 26Z" fill="#f3f3f3" />
      <rect x="9" y="11" width="5.5" height="5.5" fill="#e2522b" />
      <rect x="15.5" y="11" width="5.5" height="5.5" fill="#6ba72c" />
      <rect x="9" y="17.5" width="5.5" height="5.5" fill="#2b9be0" />
      <rect x="15.5" y="17.5" width="5.5" height="5.5" fill="#efb42a" />
    </svg>
  ),
  chrome: (
    <svg width="30" height="30" viewBox="0 0 30 30">
      <circle cx="15" cy="15" r="15" fill="#fbc62f" />
      <path d="M2 7.5A15 15 0 0 1 28 7.5H15L8.5 18.7Z" fill="#dd4a34" />
      <path d="M2 7.5L8.5 18.7L15 22.5L15 30A15 15 0 0 1 2 7.5Z" fill="#1f9a55" />
      <path d="M15 30L21.5 18.7L15 15Z" fill="#fbc62f" />
      <circle cx="15" cy="15" r="7.4" fill="#fff" />
      <circle cx="15" cy="15" r="5.8" fill="#2f7bea" />
    </svg>
  ),
  player: (
    <svg width="28" height="28" viewBox="0 0 28 28">
      <path d="M6 3H25L26 25L10 27Z" fill="#6fa9d8" />
      <rect x="2" y="3" width="20" height="22" fill="#a9d0ec" />
      <circle cx="12" cy="14" r="8.5" fill="#ef8a1d" />
      <path d="M9 9L17 14L9 19Z" fill="#fff" />
    </svg>
  ),
  vlc: (
    <svg width="28" height="30" viewBox="0 0 28 30">
      <path d="M4 21H24L28 29H0Z" fill="#e97c13" />
      <path d="M12 1H16L22 24Q14 28 6 24Z" fill="#f08a1c" />
      <path d="M10.5 7H17.5L18.8 12H9.2ZM8 17H20L21.3 22Q14 25 6.7 22Z" fill="#efefef" />
    </svg>
  ),
};

function TaskButton({ label, children, running }: { label: string; children: React.ReactNode; running?: boolean }) {
  return (
    <button aria-label={label} className="relative flex h-full w-[55px] items-center justify-center">
      {children}
      {running && <span className="absolute bottom-[7px] h-1 w-[7px] rounded-full bg-[#9aa6a4]" />}
    </button>
  );
}

function Taskbar() {
  return (
    <footer className="flex h-[60px] shrink-0 items-center bg-linear-to-r from-[#1a2729] via-[#232526] to-[#192729] pl-3 text-white">
      <button aria-label="Start" className="flex h-full w-14 items-center justify-center">
        <svg width="29" height="29" viewBox="0 0 29 29">
          <path d="M0 0H14V14H0ZM15 0H29V14H15Z" fill="#58c5f7" />
          <path d="M0 15H14V29H0ZM15 15H29V29H15Z" fill="#2cb0f2" />
        </svg>
      </button>
      <button className="mr-[5px] ml-1.5 flex h-[39px] w-[123px] items-center justify-center gap-1.5 rounded-full bg-[#f3f3f3] text-sm text-[#222]">
        <Search size={18} strokeWidth={2} />
        Search
      </button>
      <TaskButton label="Task view">{apps.taskView}</TaskButton>
      <TaskButton label="Copilot">{apps.copilot}</TaskButton>
      <TaskButton label="Teams">{apps.teams}</TaskButton>
      <TaskButton label="File Explorer" running>{apps.explorer}</TaskButton>
      <TaskButton label="Edge">{apps.edge}</TaskButton>
      <TaskButton label="Store">{apps.store}</TaskButton>
      <TaskButton label="Chrome" running>{apps.chrome}</TaskButton>
      <TaskButton label="Media Player" running>{apps.player}</TaskButton>
      <TaskButton label="VLC">{apps.vlc}</TaskButton>
      <button aria-label="Power BI" className="relative mr-[3px] ml-[3px] flex h-[50px] w-[49px] items-center rounded-md border border-[#3d4243] bg-[#2b3031]">
        <span className="flex h-full w-11 items-center justify-center rounded-md border-r border-[#454a4b] bg-[#323738] pl-1">
          <PowerBi size={30} />
        </span>
        <span className="absolute bottom-0 left-3.5 h-1 w-5 rounded-full bg-[#6fb9ee]" />
      </button>
      <TaskButton label="WhatsApp">
        <FaWhatsapp size={33} color="#25d366" />
      </TaskButton>
      <div className="mr-6 ml-auto flex items-center">
        <ChevronUp size={20} strokeWidth={2} />
        <svg width="22" height="16" viewBox="0 0 22 16" className="ml-[19px]">
          <path d="M5 14A5 5 0 0 1 4 5A6.5 6.5 0 0 1 16 5Z" fill="#a9a9a9" />
          <path d="M4 14.5A3.5 3.5 0 0 1 5 8Q9 4 13 7Q20 5 21 11Q21 14.5 17 14.5Z" fill="#fff" />
        </svg>
        <span className="ml-[22px] text-sm">ENG</span>
        <Wifi size={22} strokeWidth={2} className="ml-[21px]" />
        <Volume2 size={21} strokeWidth={2} className="ml-[9px]" />
        <svg width="21" height="14" viewBox="0 0 21 14" className="ml-[9px]">
          <rect x="1" y="1" width="17" height="12" rx="2.5" fill="none" stroke="#fff" strokeWidth="1.6" />
          <rect x="3" y="3.5" width="5.5" height="7" rx="1" fill="#fff" />
          <path d="M19.8 5V9" stroke="#fff" strokeWidth="1.8" />
        </svg>
        <div className="ml-[21px] text-right text-sm leading-5">
          <div>6:11 PM</div>
          <div>01/25/2025</div>
        </div>
      </div>
    </footer>
  );
}

export default function App() {
  return (
    <div className="relative flex h-screen min-w-[1600px] flex-col overflow-hidden bg-[#f3f2f1] font-['Noto_Sans',sans-serif] text-sm">
      <TitleBar />
      <Tabs />
      <Ribbon />
      <main className="flex min-h-0 flex-1">
        <QueriesPane />
        <section className="flex min-w-0 flex-1 flex-col pt-[13px] pr-[5px] pl-[5px]">
          <FormulaBar />
          <DataGrid />
        </section>
        <SettingsPane />
      </main>
      <div className="flex h-7 shrink-0 items-center border-t border-[#cfcdcb] px-[7px] text-[13px] text-[#444]">
        <span>19 COLUMNS, 89 ROWS</span>
        <span className="ml-5">Column profiling based on top 1000 rows</span>
        <span className="ml-auto">PREVIEW DOWNLOADED AT 6:09 PM</span>
      </div>
      <Taskbar />
      <div className="pointer-events-none absolute bottom-5 left-1/2 flex -translate-x-1/2 flex-col items-center font-bold">
        <span lang="ar" className="font-['DejaVu_Sans',sans-serif] text-[64px] leading-[72px] text-black/10">
          مستقل
        </span>
        <span className="font-['Liberation_Sans',sans-serif] text-[37px] leading-[44px] text-[#6b6b6b]">mostaql.com</span>
      </div>
    </div>
  );
}
